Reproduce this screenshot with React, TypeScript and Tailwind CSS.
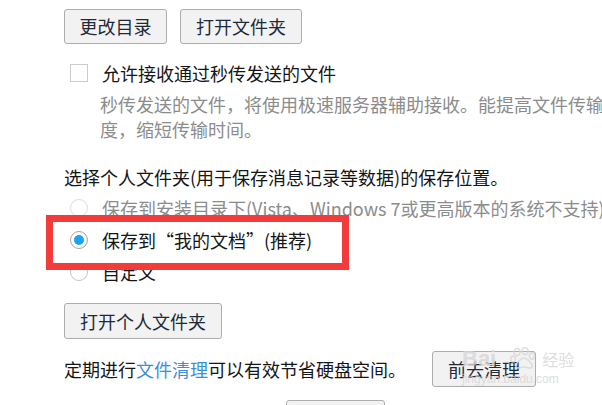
const FONT = "font-['Microsoft_YaHei','Noto_Sans_CJK_SC',sans-serif]";

function Btn({ label, width, height = "h-[35px]" }: { label: string; width: string; height?: string }) {
  return (
    <button
      className={`${width} ${height} shrink-0 rounded-[3px] border border-[#adadad] bg-[#f2f2f2] text-[18px] text-[#1d2a3a]`}
    >
      {label}
    </button>
  );
}

function Radio({ checked, disabled }: { checked?: boolean; disabled?: boolean }) {
  return (
    <span
      className={`flex h-[18px] w-[18px] shrink-0 items-center justify-center rounded-full border bg-white ${
        disabled ? "border-[#dedede]" : checked ? "border-[#a3a3a3]" : "border-[#c4c4c4]"
      }`}
    >
      {checked && <span className="h-[10px] w-[10px] rounded-full bg-[#1aa3f2]" />}
    </span>
  );
}

function Paw() {
  return (
    <svg width="26" height="24" viewBox="0 0 26 24" fill="none" stroke="#d8d8d8" strokeWidth="1.6">
      <ellipse cx="7" cy="5" rx="3" ry="3.6" />
      <ellipse cx="15" cy="4" rx="3" ry="3.6" />
      <ellipse cx="22" cy="9" rx="2.6" ry="3.2" />
      <ellipse cx="3" cy="12" rx="2.4" ry="3" />
      <path d="M8 21c-3 0-3-4 0-6 2-2 3-4 6-4s4 2 6 4c3 2 3 6 0 6-2 0-4-1-6-1s-4 1-6 1z" />
    </svg>
  );
}

export default function App() {
  return (
    <div className={`relative h-[405px] w-[602px] overflow-hidden bg-white pl-[64px] ${FONT}`}>
      <div className="flex gap-[13px] pt-[9px]">
        <Btn label="更改目录" width="w-[103px]" />
        <Btn label="打开文件夹" width="w-[122px]" />
      </div>

      <div className="mt-[20px] flex h-[18px] items-center">
        <span className="ml-[6px] h-[18px] w-[18px] border border-[#cccccc] bg-white" />
        <span className="ml-[14px] whitespace-nowrap text-[18px] text-[#151515]">允许接收通过秒传发送的文件</span>
      </div>

      <div className="mt-[10px] pl-[36px] text-[18px] leading-[25px] text-[#8c8c8c]">
        <div className="whitespace-nowrap">秒传发送的文件，将使用极速服务器辅助接收。能提高文件传输速</div>
        <div className="whitespace-nowrap">度，缩短传输时间。</div>
      </div>

      <div className="mt-[23px] whitespace-nowrap text-[18px] leading-[24px] text-[#151515]">
        选择个人文件夹(用于保存消息记录等数据)的保存位置。
      </div>

      <div className="mt-[3px] flex flex-col pl-[6px] text-[18px]">
        <div className="flex h-[32px] items-center gap-[14px]">
          <Radio disabled />
          <span className="whitespace-nowrap text-[#8c8c8c]">保存到安装目录下(Vista、Windows 7或更高版本的系统不支持)</span>
        </div>
        <div className="flex h-[32px] items-center gap-[14px]">
          <Radio checked />
          <span className="whitespace-nowrap text-[#151515]">保存到“我的文档”(推荐)</span>
        </div>
        <div className="flex h-[32px] items-center gap-[14px]">
          <Radio />
          <span className="whitespace-nowrap text-[#151515]">自定义</span>
        </div>
      </div>

      <div className="mt-[15px]">
        <Btn label="打开个人文件夹" width="w-[158px]" height="h-[36px]" />
      </div>

      <div className="mt-[12px] flex items-center gap-[26px]">
        <span className="whitespace-nowrap text-[18px] text-[#151515]">
          定期进行<span className="text-[#3b8fd8]">文件清理</span>可以有效节省硬盘空间。
        </span>
        <Btn label="前去清理" width="w-[104px]" height="h-[36px]" />
      </div>

      <div className="mt-[13px] ml-[222px]">
        <Btn label="" width="w-[99px]" height="h-[36px]" />
      </div>

      <div className="absolute left-[46px] top-[215px] h-[55px] w-[303px] border-[7px] border-[#f23b3b]" />

      <div className="pointer-events-none absolute left-[462px] top-[346px] flex flex-col text-[#d6d6d6] opacity-80">
        <div className="flex items-center">
          <span className="font-['Liberation_Sans',sans-serif] text-[22px] font-bold leading-[26px]">Bai</span>
          <span className="ml-[14px]"><Paw /></span>
          <span className="ml-[6px] text-[16px] leading-[26px]">经验</span>
        </div>
        <span className="font-['Liberation_Sans',sans-serif] text-[12px] leading-[14px]">jingyan.baidu.com</span>
      </div>
    </div>
  );
}
